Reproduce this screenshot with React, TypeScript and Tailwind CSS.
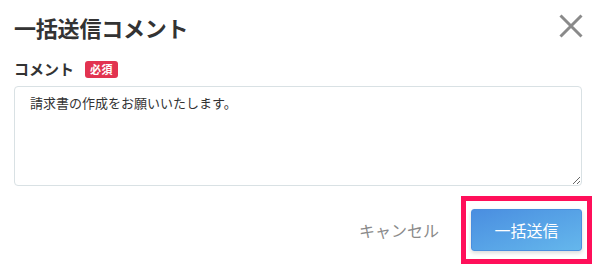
import { useState } from "react";

const FONT = "font-['Noto_Sans_CJK_JP','Noto_Sans',sans-serif]";

export default function App() {
  const [comment, setComment] = useState("請求書の作成をお願いいたします。");

  return (
    <div className={`${FONT} h-[267px] w-[593px] bg-white text-[#333]`}>
      {/* header */}
      <div className="flex items-start justify-between pl-[14px] pr-[10px] pt-[11px]">
        <h2 className="text-[22px] font-bold leading-[32px] tracking-[-0.2px]">一括送信コメント</h2>
        <button className="mt-[3px] p-0 text-[#8a8a8a]" aria-label="close">
          <svg width="24" height="24" viewBox="0 0 24 24">
            <path d="M1.5 1.5 L22.5 22.5 M22.5 1.5 L1.5 22.5" stroke="currentColor" strokeWidth="3" />
          </svg>
        </button>
      </div>

      {/* field */}
      <div className="pl-[14px] pr-[11px] pt-[15px]">
        <div className="flex items-center gap-[11px]">
          <span className="text-[15px] font-bold leading-[22px]">コメント</span>
          <span className="rounded-[3px] bg-[#e23350] px-[5px] text-[11px] font-bold leading-[17px] tracking-[0.5px] text-white">必須</span>
        </div>
        <textarea
          value={comment}
          onChange={(e) => setComment(e.target.value)}
          className={`${FONT} mt-[6px] block h-[100px] w-full rounded-[4px] border border-[#d9e1e4] px-[15px] pt-[6px] text-[13px] leading-[20px] text-[#333] outline-none`}
        />
      </div>

      {/* footer */}
      <div className="flex items-center justify-end gap-[22px] pr-[1px] pt-[10px]">
        <button className="text-[16px] leading-[24px] text-[#8a8a8a]">キャンセル</button>
        <div className="border-[5px] border-[#ff0f5a] px-[5px] py-[8px]">
          <button className="h-[42px] w-[111px] rounded-[3px] border border-[#4b8fdf] bg-gradient-to-br from-[#4a8ee0] to-[#65b7ec] text-[16px] text-white shadow-[0_2px_4px_rgba(0,0,0,0.15)]">
            一括送信
          </button>
        </div>
      </div>
    </div>
  );
}
